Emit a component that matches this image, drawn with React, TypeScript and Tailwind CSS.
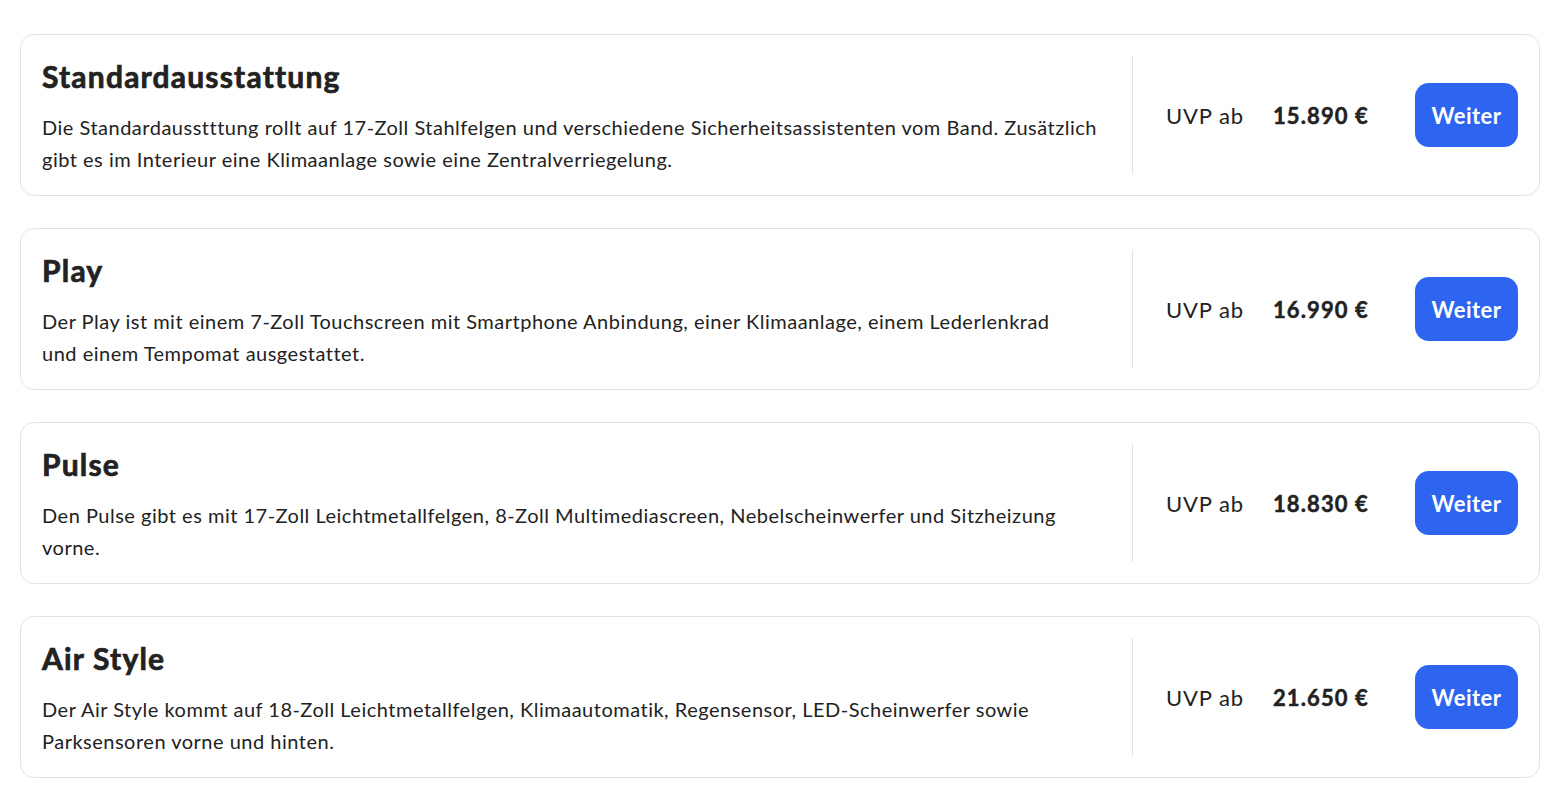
import React from "react";

const items = [
  {
    title: "Standardausstattung",
    desc: "Die Standardausstttung rollt auf 17-Zoll Stahlfelgen und verschiedene Sicherheitsassistenten vom Band. Zusätzlich gibt es im Interieur eine Klimaanlage sowie eine Zentralverriegelung.",
    price: "15.890 €",
  },
  {
    title: "Play",
    desc: "Der Play ist mit einem 7-Zoll Touchscreen mit Smartphone Anbindung, einer Klimaanlage, einem Lederlenkrad und\u00A0einem Tempomat ausgestattet.",
    price: "16.990 €",
  },
  {
    title: "Pulse",
    desc: "Den Pulse gibt es mit 17-Zoll Leichtmetallfelgen, 8-Zoll Multimediascreen, Nebelscheinwerfer und Sitzheizung vorne.",
    price: "18.830 €",
  },
  {
    title: "Air Style",
    desc: "Der Air Style kommt auf 18-Zoll Leichtmetallfelgen, Klimaautomatik, Regensensor, LED-Scheinwerfer sowie Parksensoren vorne und hinten.",
    price: "21.650 €",
  },
];

export default function App() {
  return (
    <div
      className="min-h-screen bg-white pl-[20px] pr-[16px] pt-[34px] flex flex-col gap-[32px] text-[#222]"
      style={{ fontFamily: "Lato, 'Noto Sans', sans-serif" }}
    >
      {items.map((it) => (
        <div
          key={it.title}
          className="flex border border-[#e2e2e2] rounded-[14px] p-[21px] h-[162px]"
        >
          <div className="flex-1 pr-[30px] border-r border-[#e2e2e2]">
            <h2 className="text-[30px] leading-[40px] font-bold tracking-[1.2px] mb-[15px] [-webkit-text-stroke:0.7px_#222]">
              {it.title}
            </h2>
            <p className="text-[20px] leading-[32px] tracking-[0.5px] max-w-[1065px]">{it.desc}</p>
          </div>
          <div className="flex items-center pl-[33px]">
            <span className="text-[22px] tracking-[0.9px] w-[107px]">UVP ab</span>
            <span className="text-[22px] font-bold tracking-[1.1px] w-[142px] [-webkit-text-stroke:0.5px_#222]">{it.price}</span>
            <button className="bg-[#2d65f0] text-white text-[22px] font-bold tracking-[0.5px] rounded-[14px] w-[103px] h-[64px]">
              Weiter
            </button>
          </div>
        </div>
      ))}
    </div>
  );
}
